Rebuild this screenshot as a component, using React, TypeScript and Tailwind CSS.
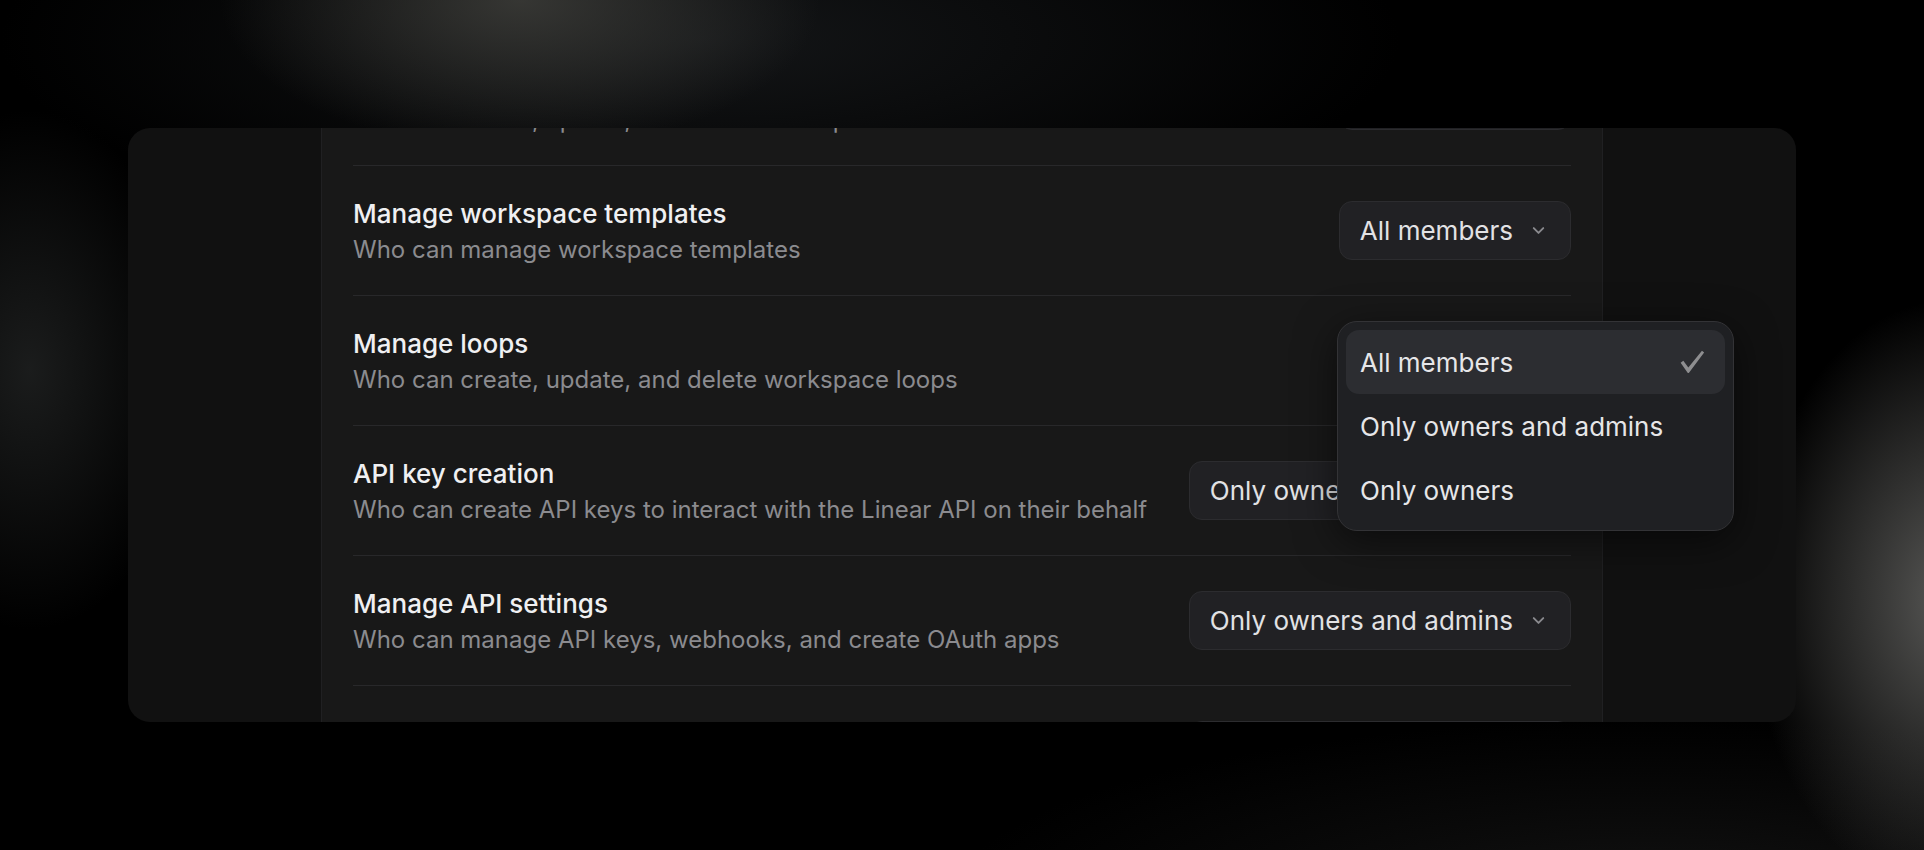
import { ChevronDown } from "lucide-react";

type Row = {
  title: string;
  desc: string;
  value: string;
  open?: boolean;
};

const rows: Row[] = [
  { title: "Manage views", desc: "Who can create, update, and delete workspace views", value: "All members" },
  { title: "Manage workspace templates", desc: "Who can manage workspace templates", value: "All members" },
  { title: "Manage loops", desc: "Who can create, update, and delete workspace loops", value: "All members", open: true },
  {
    title: "API key creation",
    desc: "Who can create API keys to interact with the Linear API on their behalf",
    value: "Only owners and admins",
  },
  {
    title: "Manage API settings",
    desc: "Who can manage API keys, webhooks, and create OAuth apps",
    value: "Only owners and admins",
  },
  { title: "Manage integrations", desc: "Who can install and manage integrations", value: "Only owners and admins" },
];

const options = ["All members", "Only owners and admins", "Only owners"];

function Check() {
  return (
    <svg width="26" height="26" viewBox="0 0 24 24" className="text-[#8e8e90]">
      <path
        d="M1.5 12.8 L4 10.9 L8.6 17 L21.2 1.6 L23.2 3.2 L9.4 21.6 Q8.6 22.6 7.8 21.6 Z"
        fill="currentColor"
      />
    </svg>
  );
}

function Select({ value }: { value: string }) {
  return (
    <button className="flex h-[59px] shrink-0 items-center gap-[16px] rounded-[13px] border border-[#2c2c2f] bg-[#212124] pl-[20px] pr-[22px] text-[26px] text-[#e2e2e4]">
      <span>{value}</span>
      <ChevronDown className="h-[19px] w-[19px] text-[#8a8a8e]" strokeWidth={2.4} />
    </button>
  );
}

function Menu({ value }: { value: string }) {
  return (
    <div className="absolute right-[-163px] top-[25px] z-10 w-[397px] rounded-[20px] border border-[#333336] bg-[#1f2023] p-[8px] shadow-[0_10px_40px_rgba(0,0,0,0.55)]">
      {options.map((opt) => (
        <div
          key={opt}
          className={
            "flex h-[64px] items-center justify-between rounded-[13px] pl-[14px] pr-[20px] text-[26px] text-[#e6e6e8] " +
            (opt === value ? "bg-[#2c2d31]" : "")
          }
        >
          <span>{opt}</span>
          {opt === value && <Check />}
        </div>
      ))}
    </div>
  );
}

export default function App() {
  return (
    <div className="h-[850px] w-full overflow-hidden bg-black bg-[image:radial-gradient(ellipse_300px_150px_at_520px_0px,rgba(64,64,60,0.8),transparent),radial-gradient(ellipse_700px_200px_at_700px_40px,rgba(22,24,26,0.9),transparent),radial-gradient(ellipse_160px_260px_at_30px_370px,rgba(38,40,40,0.7),transparent),radial-gradient(ellipse_200px_300px_at_1950px_600px,rgba(92,92,90,0.95),transparent),radial-gradient(ellipse_700px_180px_at_1650px_900px,rgba(30,30,30,0.6),transparent)] px-[128px] pt-[128px] font-['Inter',sans-serif]">
      <div className="flex h-[594px] justify-center overflow-hidden rounded-[22px] bg-[#111111]">
        <div className="w-[1282px] border-x border-[#202022] bg-[#181818] px-[31px]">
          <div className="mt-[-92px]">
            {rows.map((row) => (
              <div
                key={row.title}
                className="relative flex h-[130px] items-center justify-between border-b border-[#28282a]"
              >
                <div className="flex flex-col pt-[2px]">
                  <span className="text-[26px] font-medium leading-[36px] text-[#f0f0f2]">{row.title}</span>
                  <span className="text-[24px] leading-[35px] text-[#8b8b8f]">{row.desc}</span>
                </div>
                <Select value={row.value} />
                {row.open && <Menu value={row.value} />}
              </div>
            ))}
          </div>
        </div>
      </div>
    </div>
  );
}
